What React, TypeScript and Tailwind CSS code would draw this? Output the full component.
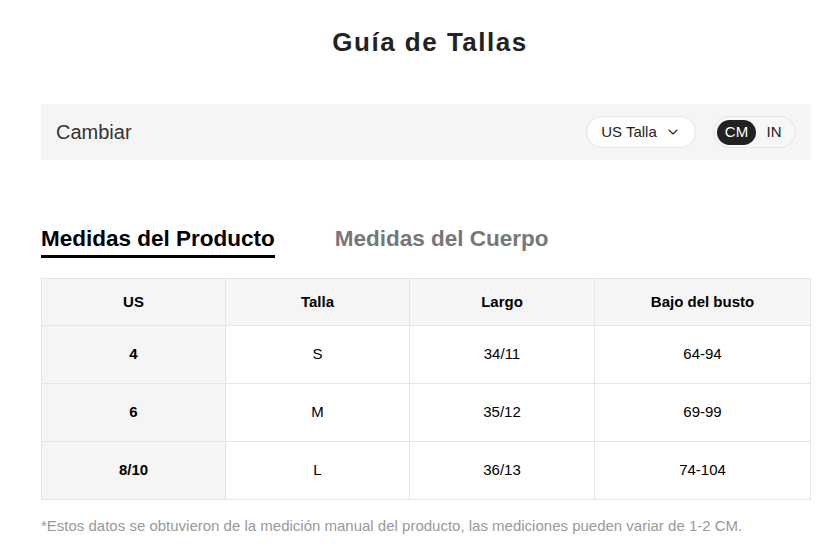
import { ChevronDown } from "lucide-react";

const rows = [
  { us: "4", talla: "S", largo: "34/11", busto: "64-94" },
  { us: "6", talla: "M", largo: "35/12", busto: "69-99" },
  { us: "8/10", talla: "L", largo: "36/13", busto: "74-104" },
];

export default function App() {
  return (
    <div className="min-h-screen bg-white font-['Liberation_Sans',Arial,sans-serif] text-[#222]">
      <div className="mx-[41px] w-[770px] pt-[25px]">
        <h1 className="pl-[8px] text-center text-[26px] font-bold leading-[34px] tracking-[1.5px] text-[#222]">Guía de Tallas</h1>

        {/* unit switch bar */}
        <div className="mt-[45px] flex h-[56px] items-center justify-between bg-[#f5f5f5] pl-[15px] pr-[15px]">
          <span className="text-[20px] text-[#333]">Cambiar</span>
          <div className="flex items-center gap-[17px]">
            <button className="flex h-[32px] w-[110px] items-center justify-center gap-[8px] rounded-full border border-[#e5e5e5] bg-white text-[15px] text-[#222]">
              US Talla
              <ChevronDown size={16} strokeWidth={1.6} />
            </button>
            <div className="flex h-[32px] items-center rounded-full border border-[#e5e5e5] bg-[#f7f7f7] p-[3px] text-[15px]">
              <span className="flex h-[25px] w-[39px] items-center justify-center rounded-full bg-[#222] text-white">CM</span>
              <span className="flex h-[25px] w-[36px] items-center justify-center text-[#222]">IN</span>
            </div>
          </div>
        </div>

        {/* tabs */}
        <div className="mt-[65px] flex gap-[60px] text-[22.5px] font-bold leading-[28px]">
          <span className="border-b-[3px] border-black pb-[2px] text-black">Medidas del Producto</span>
          <span className="text-[#777]">Medidas del Cuerpo</span>
        </div>

        <table className="mt-[20px] w-full border-collapse text-center text-[15px] text-black">
          <thead>
            <tr className="h-[47px] bg-[#f5f5f5] font-bold">
              <th className="w-[184px] border border-[#e5e5e5]">US</th>
              <th className="w-[184px] border border-[#e5e5e5]">Talla</th>
              <th className="w-[185px] border border-[#e5e5e5]">Largo</th>
              <th className="border border-[#e5e5e5]">Bajo del busto</th>
            </tr>
          </thead>
          <tbody>
            {rows.map((r) => (
              <tr key={r.us} className="h-[58px]">
                <td className="border border-[#e5e5e5] bg-[#f5f5f5] font-bold">{r.us}</td>
                <td className="border border-[#e5e5e5]">{r.talla}</td>
                <td className="border border-[#e5e5e5]">{r.largo}</td>
                <td className="border border-[#e5e5e5]">{r.busto}</td>
              </tr>
            ))}
          </tbody>
        </table>

        <p className="mt-[16px] text-[15px] leading-[20px] text-[#999]">
          *Estos datos se obtuvieron de la medición manual del producto, las mediciones pueden variar de 1-2 CM.
        </p>
      </div>
    </div>
  );
}
